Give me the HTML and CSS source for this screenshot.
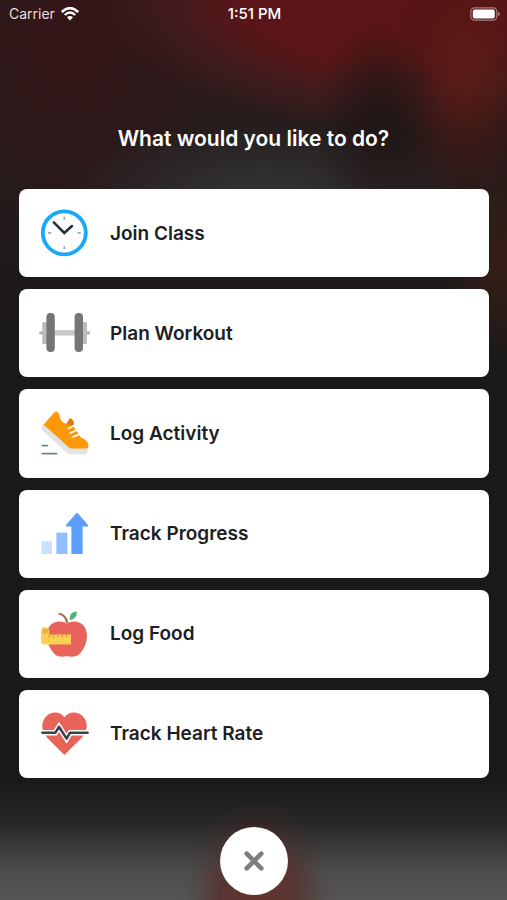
FILE: index.html
```
<!DOCTYPE html>
<html lang="en">
<head>
<meta charset="utf-8">
<meta name="viewport" content="width=device-width, initial-scale=1">
<title>What would you like to do?</title>
<link rel="stylesheet" href="styles.css">
</head>
<body>
<div class="screen">
  <header class="status">
    <div class="status-carrier">
      <span>Carrier</span>
      <svg class="wifi" viewBox="0 0 18 14" aria-hidden="true">
        <path d="M0.8 5 Q9 -2.8 17.2 5" fill="none" stroke="#fff" stroke-width="2.6"/>
        <path d="M3.8 8 Q9 3 14.2 8" fill="none" stroke="#fff" stroke-width="2.4"/>
        <path d="M6 10.3 Q9 7.8 12 10.3 L9 13.6 Z" fill="#fff"/>
      </svg>
    </div>
    <time class="status-time">1:51 PM</time>
    <svg class="battery" viewBox="0 0 31 14" role="img" aria-label="Battery full">
      <rect x="1.8" y="0.8" width="26" height="12.4" rx="3.6" fill="none" stroke="#a77d7f" stroke-width="1.2"/>
      <rect x="3.8" y="2.6" width="22" height="8.8" rx="2" fill="#fff"/>
      <path d="M29 4.8 Q30.8 5.6 30.8 7 Q30.8 8.4 29 9.2 Z" fill="#a77d7f"/>
    </svg>
  </header>

  <h1 class="title">What would you like to do?</h1>

  <main class="actions">
    <button class="action" type="button">
      <svg class="icon" viewBox="0 0 52 52" aria-hidden="true">
        <circle cx="25.3" cy="25.8" r="21.5" fill="#fff" stroke="#17a9f7" stroke-width="3.8"/>
        <path d="M25.3 9.5v3.2M25.3 39v3.2M9 25.8h3.2M38.6 25.8h3.2" stroke="#a3a7aa" stroke-width="1.7"/>
        <path d="M14.8 15.4 25.3 26 33 19" fill="none" stroke="#1c3240" stroke-width="2.5" stroke-linecap="round"/>
      </svg>
      <span>Join Class</span>
    </button>
    <button class="action" type="button">
      <svg class="icon" viewBox="0 0 52 52" aria-hidden="true">
        <path d="M0.4 24.4h4v2.8h-4zM47 24.4h4v2.8h-4z" fill="#a9a9a9"/>
        <path d="M15 23h22v5.6H15z" fill="#c9c9c9"/>
        <rect x="3.2" y="15" width="7" height="22" rx="1.5" fill="#bcbcbc"/>
        <rect x="41" y="15" width="7" height="22" rx="1.5" fill="#bcbcbc"/>
        <rect x="7.4" y="6" width="8.4" height="39" rx="4" fill="#757575"/>
        <rect x="35.6" y="6" width="8.4" height="39" rx="4" fill="#757575"/>
      </svg>
      <span>Plan Workout</span>
    </button>
    <button class="action" type="button">
      <svg class="icon" viewBox="0 0 52 52" aria-hidden="true">
        <path d="M5 16.8 3 18.6Q1.8 20.6 3 23L27.5 45.6Q29.4 47.2 32 47.2H46.5Q48.8 47 48.8 40L34 37Z" fill="#e1e3e4"/>
        <path d="M27 17.6 30.4 11.8Q31.4 10.8 32.6 12L34.8 14.8V21L30 23Z" fill="#e8740c"/>
        <path d="M4.6 17.4 15.8 5Q17.2 3.8 18.8 5.2L19.6 6.6 21.6 12Q23.5 16.6 29.8 17.6L35 20.2 42 30.6Q49 33 49.5 38.6Q49.4 41.4 47.4 41.4H32.4Q30.8 41.2 29.4 39.9Z" fill="#ff9808"/>
        <path d="M29.4 21.4 34.6 18.8M31.4 26 37 23.4M34 30 40 27.4" stroke="#fff" stroke-width="1.7" stroke-linecap="round"/>
        <path d="M3.4 38.6h5M3.4 46.6h14" stroke="#638790" stroke-width="1.9" stroke-linecap="round"/>
      </svg>
      <span>Log Activity</span>
    </button>
    <button class="action" type="button">
      <svg class="icon" viewBox="0 0 52 52" aria-hidden="true">
        <path d="M2.4 33.4H13V46H2.4z" fill="#c9e1ff"/>
        <path d="M17.4 24.6h11V46h-11z" fill="#8fbdff"/>
        <path d="M37.2 5.3Q38 4.4 38.8 5.3L49 17Q49.6 18.4 48.2 18.4H43.6V46H32.4V18.4H27.8Q26.4 18.4 27 17Z" fill="#5a9fff"/>
      </svg>
      <span>Track Progress</span>
    </button>
    <button class="action" type="button">
      <svg class="icon" viewBox="0 0 52 52" aria-hidden="true">
        <path d="M20.6 5.8Q26.5 7.5 28 14" fill="none" stroke="#a4705a" stroke-width="2.2" stroke-linecap="round"/>
        <path d="M31 12Q29.6 4.2 37.6 3.2Q38.5 10.5 31 12Z" fill="#4eb56c"/>
        <path d="M27.8 15.4C23 12.8 16.5 12.6 12 16.5C5.5 22.4 7 35 13 43C17.5 49.5 21.5 49 27.8 48.2C34 49 38.5 49.5 43 43C49 35 50 22.4 43.5 16.5C39 12.6 32.5 12.8 27.8 15.4Z" fill="#e8635c"/>
        <path d="M2 23Q2 19.2 6 19.2Q10.2 19.2 10.2 23V26.5H32V36.4H5.5Q2 36.4 2 32.5Z" fill="#fdcf55"/>
        <circle cx="6.3" cy="23.2" r="2.6" fill="#e7b03f"/>
        <path d="M10.2 26.5v2.8M14.5 26.5v3.8M19 26.5v2.8M23.4 26.5v3.8M27.8 26.5v2.8" stroke="#d99b40" stroke-width="1.2"/>
      </svg>
      <span>Log Food</span>
    </button>
    <button class="action" type="button">
      <svg class="icon" viewBox="0 0 52 52" aria-hidden="true">
        <path d="M25.4 9.2C29.5 3.2 39 3 44 8.4C50 15 48.4 23.5 42.5 30L25.4 47 8.5 30C2.5 23.5 1.2 15 7 8.4C12 3 21.5 3.2 25.4 9.2Z" fill="#e8645b"/>
        <path d="M0 24.7H16.2L20 18.8 27.6 30.6 31.2 24.7H52" fill="none" stroke="#fff" stroke-width="5.4"/>
        <path d="M3.4 24.7H16.4L20 18.8 27.6 30.6 31 24.7H48.6" fill="none" stroke="#3c4143" stroke-width="2.5" stroke-linecap="round" stroke-linejoin="round"/>
      </svg>
      <span>Track Heart Rate</span>
    </button>
  </main>

  <footer class="footer">
    <button class="close" type="button" aria-label="Close">
      <svg class="close-icon" viewBox="0 0 20 20" aria-hidden="true">
        <path d="M2.7 2.7 17.3 17.3M17.3 2.7 2.7 17.3" stroke="#7d7d7d" stroke-width="4.6" stroke-linecap="round"/>
      </svg>
    </button>
  </footer>
</div>
</body>
</html>
```
FILE: styles.css
```
* { box-sizing: border-box; }

body {
  margin: 0;
  background: #191919;
  font-family: Inter, "Liberation Sans", sans-serif;
}

.screen {
  display: flex;
  flex-direction: column;
  min-height: 100vh;
  background:
    radial-gradient(ellipse 76px 100px at 51% 100%, rgba(98, 50, 46, 0.95) 20%, rgba(88, 42, 38, 0.7) 50%, rgba(80, 40, 37, 0.2) 80%, rgba(80, 40, 37, 0)),
    linear-gradient(to top, #555 0, #4e4e4e 28px, #282828 76px, rgba(28, 28, 28, 0) 120px),
    radial-gradient(ellipse 65px 95px at 75% 120px, rgba(33, 22, 22, 0.9) 10%, rgba(33, 22, 22, 0.5) 55%, rgba(33, 22, 22, 0)),
    radial-gradient(ellipse 200px 70px at 52% 190px, #323131 10%, rgba(48, 46, 46, 0.6) 55%, rgba(48, 46, 46, 0)),
    radial-gradient(ellipse 80px 130px at 92% 70px, rgba(96, 28, 20, 0.8), rgba(80, 24, 20, 0.5) 55%, rgba(80, 24, 20, 0)),
    radial-gradient(ellipse 60px 100px at 100% 260px, rgba(62, 32, 20, 0.8), rgba(62, 32, 20, 0)),
    radial-gradient(ellipse 290px 145px at 76% -10px, #5b1517 50%, rgba(75, 28, 31, 0.7) 75%, rgba(60, 28, 31, 0)),
    radial-gradient(ellipse 170px 190px at 14% 40px, rgba(56, 20, 23, 0.9), rgba(56, 20, 23, 0)),
    linear-gradient(#241b1b 0, #251b1b 180px, #191919 380px);
  color: #fff;
}

.status {
  display: grid;
  grid-template-columns: 1fr auto 1fr;
  align-items: center;
  height: 27px;
  padding: 0 7px 0 9px;
  font-size: 14px;
}

.status-carrier {
  display: flex;
  align-items: center;
  gap: 6px;
  color: #e6dede;
}

.wifi { width: 18px; height: 14px; }

.status-time {
  font-size: 15px;
  font-weight: 500;
}

.battery {
  width: 31px;
  height: 14px;
  justify-self: end;
}

.title {
  margin: 96px 16px 34px;
  font-size: 21px;
  font-weight: 600;
  line-height: 32px;
  text-align: center;
}

.actions {
  flex: 1;
  display: flex;
  flex-direction: column;
  gap: 12px;
  padding: 0 18px 0 19px;
}

.action {
  flex: 1;
  display: flex;
  align-items: center;
  gap: 19px;
  min-height: 80px;
  padding: 0 20px;
  border: 0;
  border-radius: 8px;
  background: #fff;
  color: #202022;
  font: inherit;
  font-size: 19px;
  font-weight: 600;
  text-align: left;
  cursor: pointer;
}

.icon {
  flex: none;
  width: 52px;
  height: 52px;
}

.footer {
  display: flex;
  justify-content: center;
  padding: 49px 0 5px;
}

.close {
  display: grid;
  place-items: center;
  width: 68px;
  height: 68px;
  padding: 0;
  border: 0;
  border-radius: 50%;
  background: #fff;
  cursor: pointer;
}

.close-icon { width: 20px; height: 20px; }
```
